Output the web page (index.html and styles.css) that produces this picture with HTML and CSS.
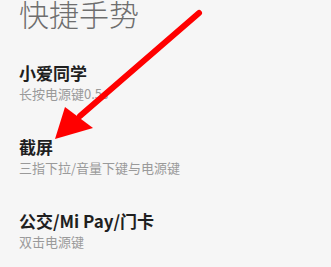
FILE: index.html
```html
<!DOCTYPE html>
<html lang="zh-CN">
<head>
    <meta charset="UTF-8">
    <meta name="viewport" content="width=device-width, initial-scale=1.0">
    <title>快捷手势</title>
    <link rel="stylesheet" href="styles.css">
</head>
<body>
    <div class="page">
        <h1 class="title">快捷手势</h1>
        <div class="list">
            <div class="item">
                <div class="name">小爱同学</div>
                <div class="desc">长按电源键0.5s</div>
            </div>
            <div class="item">
                <div class="name">截屏</div>
                <div class="desc">三指下拉/音量下键与电源键</div>
            </div>
            <div class="item">
                <div class="name">公交/Mi Pay/门卡</div>
                <div class="desc">双击电源键</div>
            </div>
        </div>
    </div>

    <svg class="arrow" width="331" height="267" viewBox="0 0 331 267">
        <line x1="199" y1="13" x2="80" y2="116" stroke="#ff0000" stroke-width="6" stroke-linecap="round"/>
        <polygon points="55,139 65,107 93,128" fill="#ff0000"/>
    </svg>
</body>
</html>
```

FILE: styles.css
```css
body {
    margin: 0;
    background-color: #f6f6f6;
    font-family: "Noto Sans CJK SC", "Noto Sans", sans-serif;
    width: 331px;
    height: 267px;
    overflow: hidden;
}

.page {
    padding: 0 19px;
}

.title {
    margin: 0 0 36px;
    font-size: 30px;
    line-height: 26px;
    font-weight: 300;
    color: #6e6e6e;
}

.list {
    display: flex;
    flex-direction: column;
    gap: 32px;
}

.name {
    font-size: 17px;
    line-height: 22px;
    font-weight: 700;
    color: #1f1f1f;
}

.desc {
    font-size: 13px;
    line-height: 20px;
    color: #9a9a9a;
}

.arrow {
    position: absolute;
    left: 0;
    top: 0;
}
```
